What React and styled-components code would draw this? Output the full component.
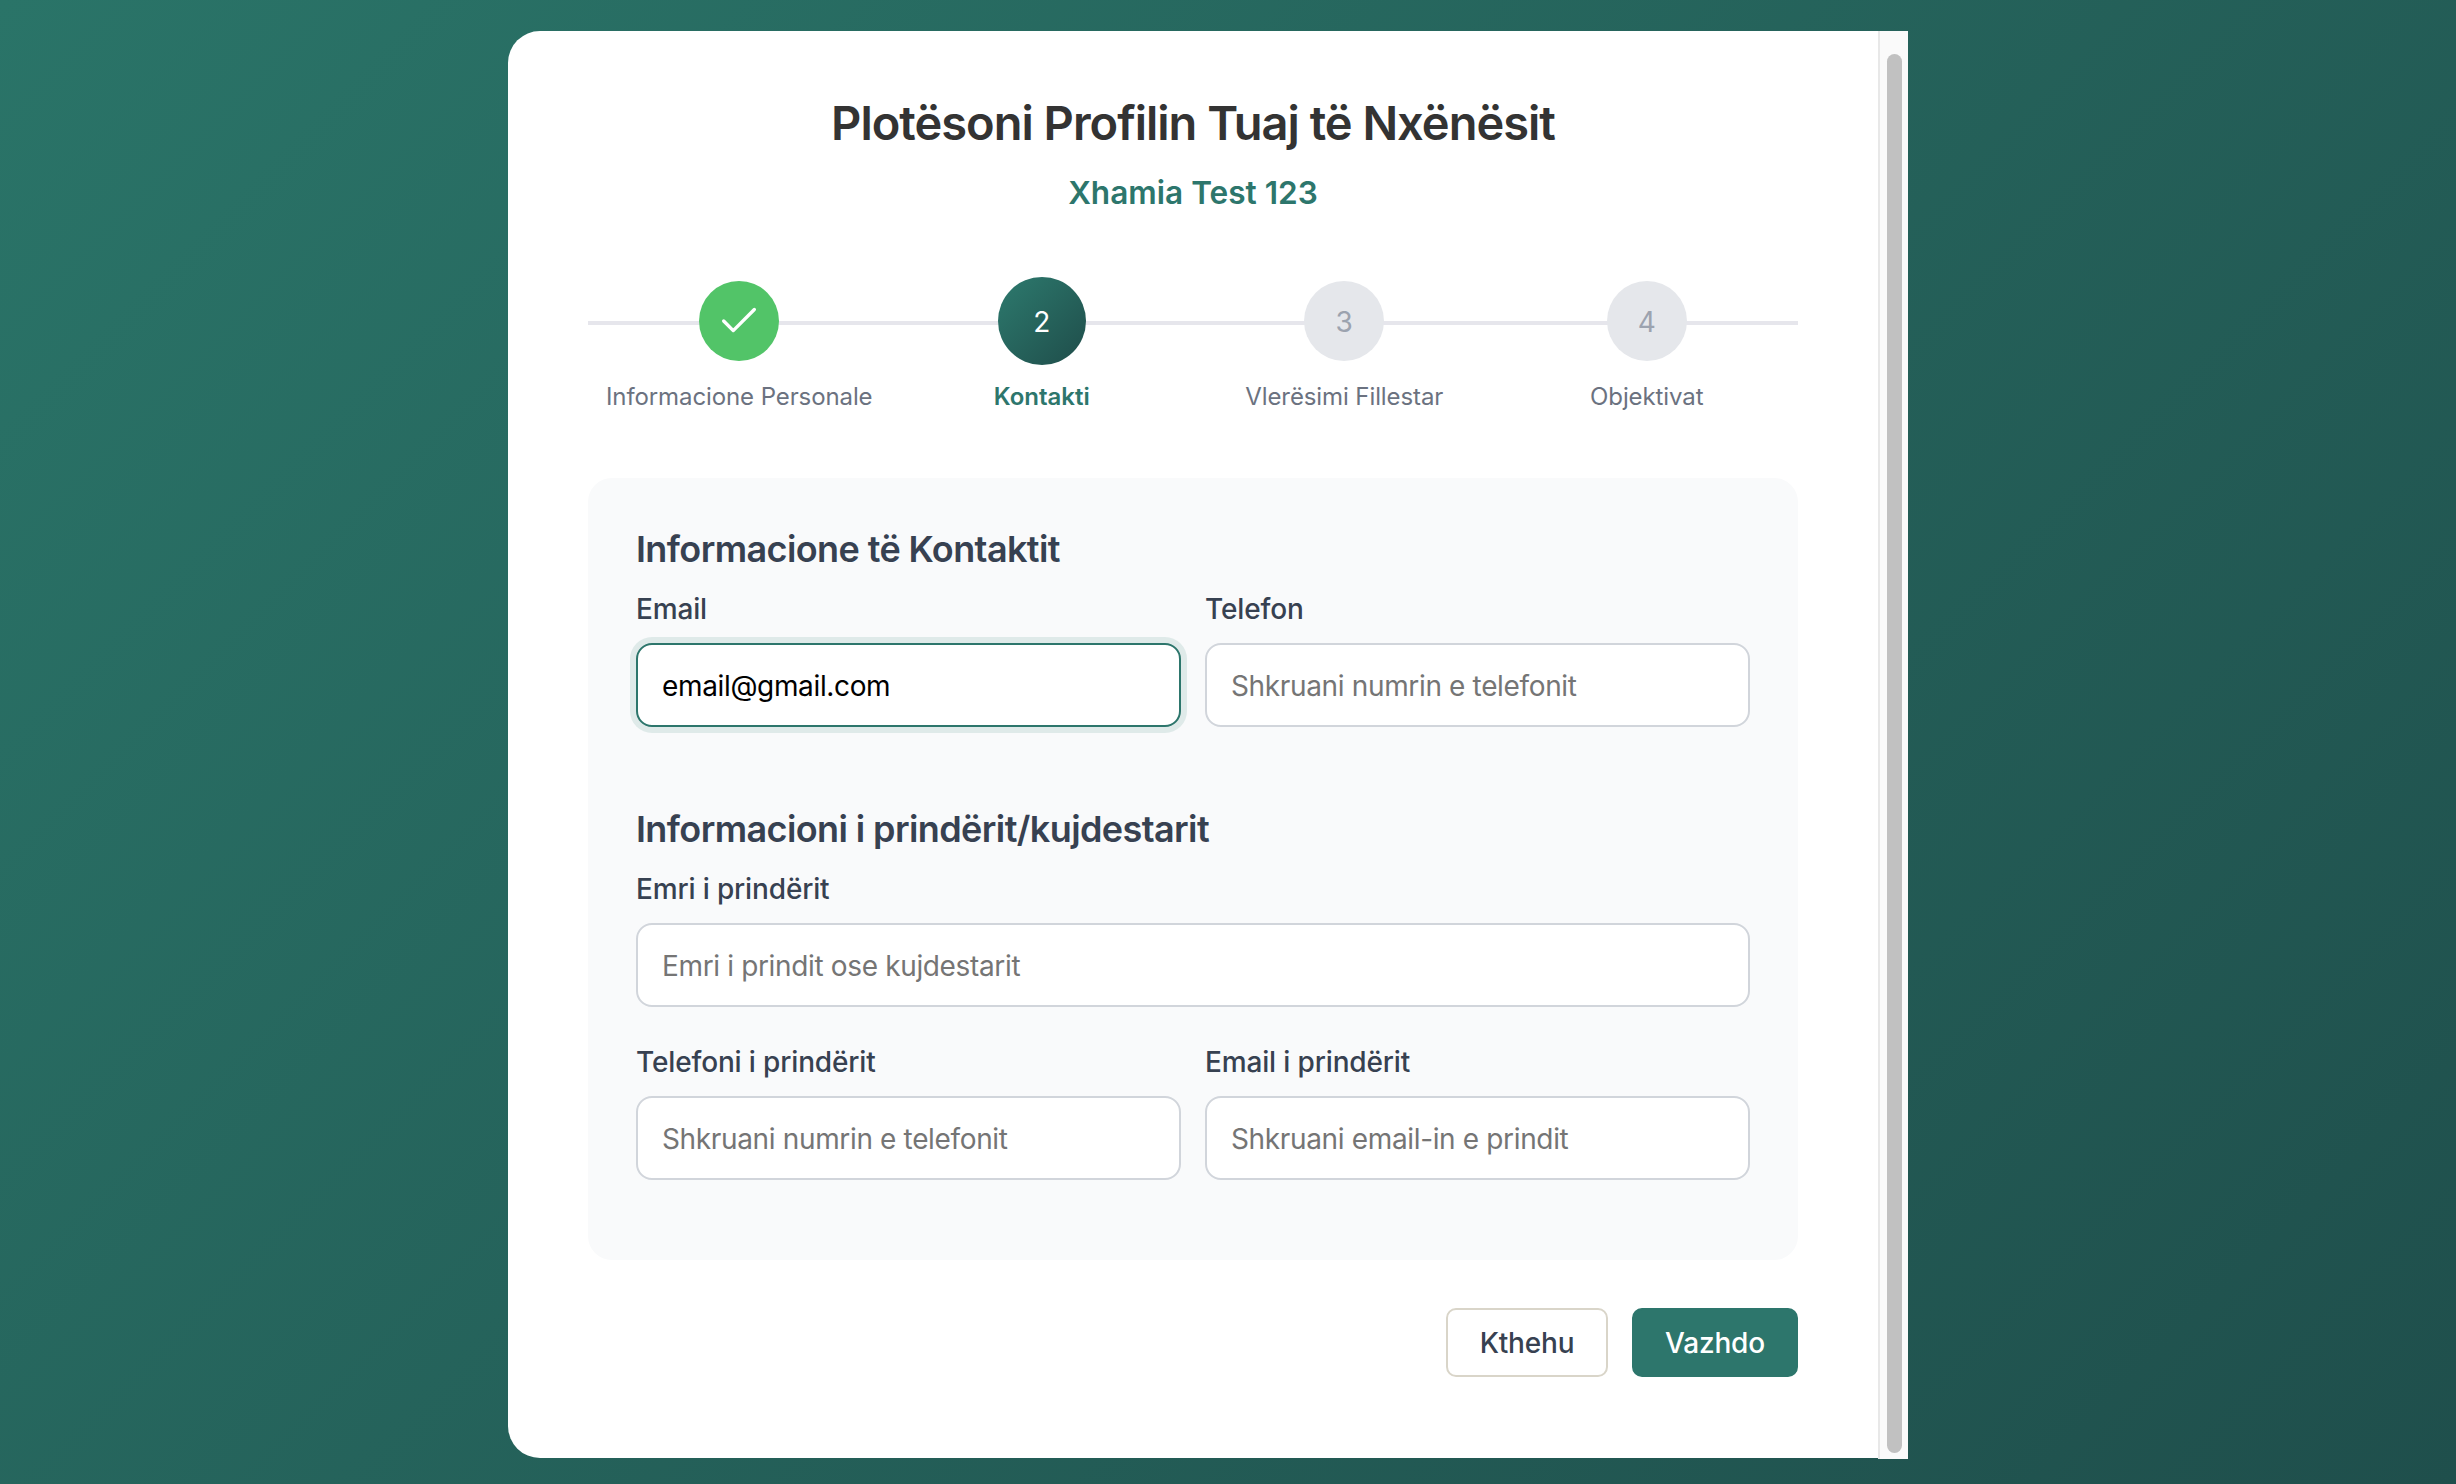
import React from "react";
import styled, { createGlobalStyle } from "styled-components";
import { Check } from "lucide-react";

const Global = createGlobalStyle`
  * { box-sizing: border-box; }
  html, body { margin: 0; height: 100%; overflow: hidden; }
  body { font-family: Inter, "Noto Sans", sans-serif; }
`;
const Page = styled.div`
  height: 1484px;
  padding: 31px 0 26px 508px;
  background: linear-gradient(135deg, #2a7468 0%, #1f4f4c 100%);
`;
const Card = styled.div`
  display: flex;
  width: 1400px;
  height: 1427px;
  background: #fff;
  border-radius: 32px 0 0 32px;
`;
const Content = styled.div`
  flex: 1;
  padding: 64px 80px 0;
`;
const ScrollTrack = styled.div`
  flex: none;
  width: 30px;
  height: 1428px;
  padding: 23px 6px 6px 7px;
  background: #fafafa;
  border-left: 2px solid #e8e8e8;
`;
const ScrollThumb = styled.div`
  height: 100%;
  border-radius: 8px;
  background: #c1c1c1;
`;
const Title = styled.h1`
  margin: 0;
  text-align: center;
  font-size: 47px;
  line-height: 56px;
  letter-spacing: -1px;
  font-weight: 600;
  color: #333;
`;
const Subtitle = styled.p`
  margin: 22px 0 0;
  text-align: center;
  font-size: 31.6px;
  line-height: 40px;
  font-weight: 600;
  color: #2d766c;
`;
const Steps = styled.div`
  position: relative;
  display: flex;
  margin-top: 64px;
  &::before {
    content: "";
    position: absolute;
    left: 0;
    right: 0;
    top: 44px;
    height: 4px;
    background: #e6e6ec;
  }
`;
const Step = styled.div`
  position: relative;
  flex: 1;
  display: flex;
  flex-direction: column;
  align-items: center;
`;
const CircleSlot = styled.div`
  height: 88px;
  display: flex;
  align-items: center;
  justify-content: center;
`;
const Circle = styled.div`
  display: flex;
  align-items: center;
  justify-content: center;
  padding-top: ${(p) => (p.$state === "done" ? 0 : 2)}px;
  border-radius: 50%;
  font-size: 28px;
  width: ${(p) => (p.$state === "active" ? 88 : 80)}px;
  height: ${(p) => (p.$state === "active" ? 88 : 80)}px;
  color: ${(p) => (p.$state === "todo" ? "#9ca3af" : "#fff")};
  background: ${(p) =>
    p.$state === "done"
      ? "#52c468"
      : p.$state === "active"
      ? "linear-gradient(135deg, #2d7a6e, #1f4d4a)"
      : "#e5e7eb"};
`;
const StepLabel = styled.span`
  margin-top: 16px;
  font-size: 24px;
  line-height: 32px;
  letter-spacing: ${(p) => (p.$active ? 0 : -0.1)}px;
  font-weight: ${(p) => (p.$active ? 600 : 400)};
  color: ${(p) => (p.$active ? "#2d766c" : "#6b7280")};
`;
const Panel = styled.div`
  margin-top: 65px;
  height: 782px;
  padding: 49px 48px 48px;
  background: #f9fafb;
  border-radius: 24px;
`;
const Heading = styled.h2`
  margin: ${(p) => p.$before || 0}px 0 20px;
  font-size: 36px;
  line-height: 44px;
  letter-spacing: -0.6px;
  font-weight: 600;
  color: #374151;
`;
const Row = styled.div`
  display: grid;
  grid-template-columns: ${(p) => (p.$single ? "1fr" : "1fr 1fr")};
  gap: 24px;
  margin-bottom: 37px;
`;
const Field = styled.label`
  display: block;
`;
const FieldLabel = styled.span`
  display: block;
  margin-bottom: 16px;
  font-size: 28px;
  line-height: 36px;
  letter-spacing: -0.15px;
  font-weight: 500;
  color: #374151;
`;
const Input = styled.input`
  display: block;
  width: 100%;
  height: 84px;
  padding: 2px 24px 0;
  font-family: inherit;
  font-size: 28px;
  letter-spacing: -0.35px;
  color: #000;
  background: #fff;
  border: 2px solid ${(p) => (p.$focus ? "#2d766c" : "#d1d5db")};
  border-radius: 16px;
  outline: none;
  box-shadow: ${(p) => (p.$focus ? "0 0 0 6px rgba(45,122,110,0.12)" : "none")};
  &::placeholder { color: #757575; opacity: 1; }
`;
const Actions = styled.div`
  display: flex;
  justify-content: flex-end;
  gap: 24px;
  margin-top: 48px;
`;
const Button = styled.button`
  height: 69px;
  width: ${(p) => (p.$primary ? 166 : 162)}px;
  padding: 0;
  font-family: inherit;
  font-size: 28px;
  font-weight: 500;
  letter-spacing: -0.2px;
  border-radius: 10px;
  color: ${(p) => (p.$primary ? "#fff" : "#374151")};
  background: ${(p) => (p.$primary ? "#2d766c" : "#fff")};
  border: 2px solid ${(p) => (p.$primary ? "#2d766c" : "#d9d5c9")};
`;

const steps = [
  { label: "Informacione Personale", state: "done" },
  { label: "Kontakti", state: "active", n: 2 },
  { label: "Vlerësimi Fillestar", state: "todo", n: 3 },
  { label: "Objektivat", state: "todo", n: 4 },
];

const Labeled = ({ label, ...rest }) => (
  <Field>
    <FieldLabel>{label}</FieldLabel>
    <Input readOnly {...rest} />
  </Field>
);

export default function App() {
  return (
    <Page>
      <Global />
      <Card>
        <Content>
          <Title>Plotësoni Profilin Tuaj të Nxënësit</Title>
          <Subtitle>Xhamia Test 123</Subtitle>
          <Steps>
            {steps.map((s) => (
              <Step key={s.label}>
                <CircleSlot>
                  <Circle $state={s.state}>
                    {s.state === "done" ? <Check size={46} strokeWidth={1.75} /> : s.n}
                  </Circle>
                </CircleSlot>
                <StepLabel $active={s.state === "active"}>{s.label}</StepLabel>
              </Step>
            ))}
          </Steps>
          <Panel>
            <Heading>Informacione të Kontaktit</Heading>
            <Row>
              <Labeled label="Email" value="email@gmail.com" $focus />
              <Labeled label="Telefon" placeholder="Shkruani numrin e telefonit" />
            </Row>
            <Heading $before={80}>Informacioni i prindërit/kujdestarit</Heading>
            <Row $single>
              <Labeled label="Emri i prindërit" placeholder="Emri i prindit ose kujdestarit" />
            </Row>
            <Row>
              <Labeled label="Telefoni i prindërit" placeholder="Shkruani numrin e telefonit" />
              <Labeled label="Email i prindërit" placeholder="Shkruani email-in e prindit" />
            </Row>
          </Panel>
          <Actions>
            <Button>Kthehu</Button>
            <Button $primary>Vazhdo</Button>
          </Actions>
        </Content>
        <ScrollTrack>
          <ScrollThumb />
        </ScrollTrack>
      </Card>
    </Page>
  );
}
